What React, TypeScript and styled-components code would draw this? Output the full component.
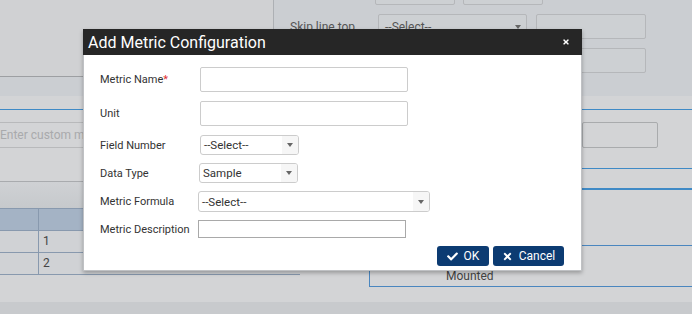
import React from "react";
import styled, { createGlobalStyle } from "styled-components";
import { FaCheck, FaTimes } from "react-icons/fa";

const Global = createGlobalStyle`
  html, body { margin: 0; padding: 0; }
  body { font-family: Roboto, "Liberation Sans", Arial, sans-serif; background: #d3d4d6; }
  * { box-sizing: border-box; }
`;

const Screen = styled.div`
  position: relative;
  width: 692px;
  height: 314px;
  overflow: hidden;
  display: flex;
  flex-direction: column;
  background: #d3d4d6;
  font-family: Roboto, "Liberation Sans", Arial, sans-serif;
`;

/* ---------- dimmed background page ---------- */
const TopArea = styled.div`
  height: 96px;
  display: grid;
  grid-template-columns: 274px 1fr;
  align-items: start;
  background: #cbced2;
`;

const LeftTopPanel = styled.div`
  height: 77px;
  background: #d0d1d3;
  border-right: 1px solid #adb0b4;
  border-bottom: 1px solid #9d9fa2;
`;

const RightTopPanel = styled.div`
  display: flex;
  flex-direction: column;
  gap: 9px;
  padding-left: 16px;
`;

const GhostRow = styled.div<{ $lead?: number; $top?: number }>`
  display: flex;
  align-items: center;
  gap: 8px;
  margin-top: ${(p) => p.$top ?? 0}px;
  padding-left: ${(p) => p.$lead ?? 0}px;
`;

const GhostBox = styled.div<{ $w: number; $h?: number; $gapLeft?: number }>`
  width: ${(p) => p.$w}px;
  height: ${(p) => p.$h ?? 25}px;
  margin-left: ${(p) => p.$gapLeft ?? 0}px;
  border: 1px solid #b5b7ba;
  border-radius: 2px;
  background: #cdd0d3;
  position: relative;
  font-size: 12px;
  color: #555;
  padding: 5px 6px;
  flex: none;
`;

const GhostArrow = styled.span`
  position: absolute;
  right: 5px;
  top: 10px;
  width: 0;
  height: 0;
  border-left: 3px solid transparent;
  border-right: 3px solid transparent;
  border-top: 4px solid #666;
`;

const GhostLabel = styled.span`
  width: 80px;
  font-size: 12px;
  color: #555;
  white-space: nowrap;
  flex: none;
`;

const MidArea = styled.div`
  flex: 1;
  display: flex;
  flex-direction: column;
`;

const TabLine = styled.div`
  margin-top: 13px;
  border-top: 1px solid #3f8ac6;
`;

const MidGrid = styled.div`
  display: grid;
  grid-template-columns: 369px 1fr;
  flex: 1;
`;

const LeftCol = styled.div`
  display: flex;
  flex-direction: column;
  padding-top: 12px;
`;

const CustomInput = styled.div`
  height: 26px;
  border-top: 1px solid #b8b9bb;
  border-bottom: 1px solid #b8b9bb;
  font-size: 12px;
  color: #a9aaac;
  line-height: 24px;
  padding-left: 0;
`;

const Band = styled.div`
  margin-top: 33px;
  height: 27px;
  border-top: 1px solid #a9abae;
  background: linear-gradient(#cfd1d4, #c6c9cc);
`;

const Table = styled.div`
  display: grid;
  grid-template-columns: 38px 1fr;
  width: 300px;
  border-bottom: 1px solid #8899ae;
`;

const HeadCell = styled.div`
  height: 22px;
  background: #a4b3c5;
  border-top: 1px solid #8899ae;
  border-left: 1px solid #8899ae;
  &:first-child { border-left: none; }
`;

const Cell = styled.div`
  height: 22px;
  border-top: 1px solid #8899ae;
  border-left: 1px solid #8899ae;
  background: #d0d2d5;
  font-size: 12px;
  color: #444;
  padding: 3px 4px;
  &:nth-child(odd) { border-left: none; }
`;

const RightCol = styled.div`
  display: flex;
  flex-direction: column;
  padding-top: 12px;
`;

const RightInput = styled.div`
  margin-left: 213px;
  width: 76px;
  height: 26px;
  border: 1px solid #a9abad;
  border-radius: 2px;
`;

const BlueRule = styled.div<{ $top: number; $thick?: number }>`
  margin-top: ${(p) => p.$top}px;
  border-top: ${(p) => p.$thick ?? 1}px solid #3f8ac6;
`;

const MountedBox = styled.div`
  margin-top: 55px;
  height: 42px;
  border: 1px solid #4a86bf;
  border-right: none;
  display: flex;
  align-items: flex-end;
  padding: 0 0 3px 76px;
  font-size: 12px;
  color: #444;
`;

const BottomBand = styled.div`
  height: 12px;
  background: #c8cacd;
`;

/* ---------- dialog ---------- */
const Dialog = styled.div`
  position: absolute;
  left: 83px;
  top: 29px;
  width: 499px;
  height: 242px;
  background: #ffffff;
  border: 1px solid #bfc1c4;
  box-shadow: 0 2px 4px rgba(0, 0, 0, 0.28);
  display: flex;
  flex-direction: column;
`;

const Header = styled.div`
  height: 26px;
  background: #262626;
  color: #ffffff;
  display: flex;
  align-items: center;
  justify-content: space-between;
  padding: 0 12px 0 5px;
  margin: -1px -1px 0 -1px;
`;

const Title = styled.h1`
  margin: 0;
  font-size: 16px;
  font-weight: 400;
  letter-spacing: 0;
`;

const Close = styled.span`
  display: flex;
  font-size: 8px;
  color: #fff;
`;

const Body = styled.div`
  display: flex;
  flex-direction: column;
  padding: 12px 17px 0 16px;
`;

const Row = styled.div<{ $h: number; $gap: number }>`
  display: flex;
  align-items: center;
  height: ${(p) => p.$h}px;
  margin-bottom: ${(p) => p.$gap}px;
`;

const Label = styled.label`
  width: 100px;
  flex: none;
  font-size: 11px;
  color: #333;
`;

const Req = styled.span`
  color: #e03030;
`;

const TextInput = styled.input<{ $w: number; $shift?: number; $dark?: boolean }>`
  width: ${(p) => p.$w}px;
  height: 100%;
  margin-left: ${(p) => p.$shift ?? 0}px;
  border: 1px solid ${(p) => (p.$dark ? "#a9a9a9" : "#cccccc")};
  border-radius: ${(p) => (p.$dark ? 0 : 2)}px;
  background: #fff;
  padding: 0 4px;
  font: 11px Roboto, "Liberation Sans", Arial, sans-serif;
  outline: none;
`;

const Select = styled.div<{ $w: number; $shift?: number }>`
  width: ${(p) => p.$w}px;
  height: 100%;
  margin-left: ${(p) => p.$shift ?? 0}px;
  border: 1px solid #cccccc;
  border-radius: 3px;
  display: flex;
  overflow: hidden;
  font-size: 11.5px;
  color: #333;
`;

const SelectValue = styled.span`
  flex: 1;
  display: flex;
  align-items: center;
  padding-left: 3px;
`;

const SelectButton = styled.span`
  width: 16px;
  flex: none;
  background: #f6f6f6;
  display: flex;
  align-items: center;
  justify-content: center;
  &::after {
    content: "";
    width: 0;
    height: 0;
    border-left: 3.5px solid transparent;
    border-right: 3.5px solid transparent;
    border-top: 4px solid #666;
  }
`;

const Actions = styled.div`
  display: flex;
  justify-content: flex-end;
  gap: 4px;
  padding-top: 0;
`;

const Button = styled.button<{ $w: number }>`
  width: ${(p) => p.$w}px;
  height: 20px;
  border: none;
  border-radius: 3px;
  background: #0c3b72;
  color: #fff;
  display: flex;
  align-items: center;
  justify-content: center;
  gap: 6px;
  padding: 0;
  font: 12px Roboto, "Liberation Sans", Arial, sans-serif;
  cursor: pointer;
  svg { font-size: 11px; }
`;

export default function App() {
  return (
    <>
      <Global />
      <Screen>
        <TopArea>
          <LeftTopPanel />
          <RightTopPanel>
            <GhostRow $top={-20} $lead={85}>
              <GhostBox $w={80} />
              <GhostBox $w={80} />
            </GhostRow>
            <GhostRow $top={0}>
              <GhostLabel>Skip line top</GhostLabel>
              <GhostBox $w={149}>
                --Select--
                <GhostArrow />
              </GhostBox>
              <GhostBox $w={110} $gapLeft={1} />
            </GhostRow>
            <GhostRow $lead={246}>
              <GhostBox $w={110} />
            </GhostRow>
          </RightTopPanel>
        </TopArea>
        <MidArea>
          <TabLine />
          <MidGrid>
            <LeftCol>
              <CustomInput>Enter custom metric</CustomInput>
              <Band />
              <Table>
                <HeadCell />
                <HeadCell />
                <Cell />
                <Cell>1</Cell>
                <Cell />
                <Cell>2</Cell>
              </Table>
            </LeftCol>
            <RightCol>
              <RightInput />
              <BlueRule $top={20} />
              <BlueRule $top={19} $thick={2} />
              <MountedBox>Mounted</MountedBox>
            </RightCol>
          </MidGrid>
          <BottomBand />
        </MidArea>

        <Dialog>
          <Header>
            <Title>Add Metric Configuration</Title>
            <Close>
              <FaTimes />
            </Close>
          </Header>
          <Body>
            <Row $h={25} $gap={9}>
              <Label>
                Metric Name<Req>*</Req>
              </Label>
              <TextInput $w={208} />
            </Row>
            <Row $h={25} $gap={9}>
              <Label>Unit</Label>
              <TextInput $w={208} />
            </Row>
            <Row $h={20} $gap={8}>
              <Label>Field Number</Label>
              <Select $w={99}>
                <SelectValue>--Select--</SelectValue>
                <SelectButton />
              </Select>
            </Row>
            <Row $h={20} $gap={8}>
              <Label>Data Type</Label>
              <Select $w={99} $shift={-1}>
                <SelectValue>Sample</SelectValue>
                <SelectButton />
              </Select>
            </Row>
            <Row $h={21} $gap={8}>
              <Label>Metric Formula</Label>
              <Select $w={232} $shift={-2}>
                <SelectValue>--Select--</SelectValue>
                <SelectButton />
              </Select>
            </Row>
            <Row $h={18} $gap={8}>
              <Label>Metric Description</Label>
              <TextInput $w={208} $shift={-2} $dark />
            </Row>
            <Actions>
              <Button $w={52}>
                <FaCheck />
                OK
              </Button>
              <Button $w={71}>
                <FaTimes />
                Cancel
              </Button>
            </Actions>
          </Body>
        </Dialog>
      </Screen>
    </>
  );
}
